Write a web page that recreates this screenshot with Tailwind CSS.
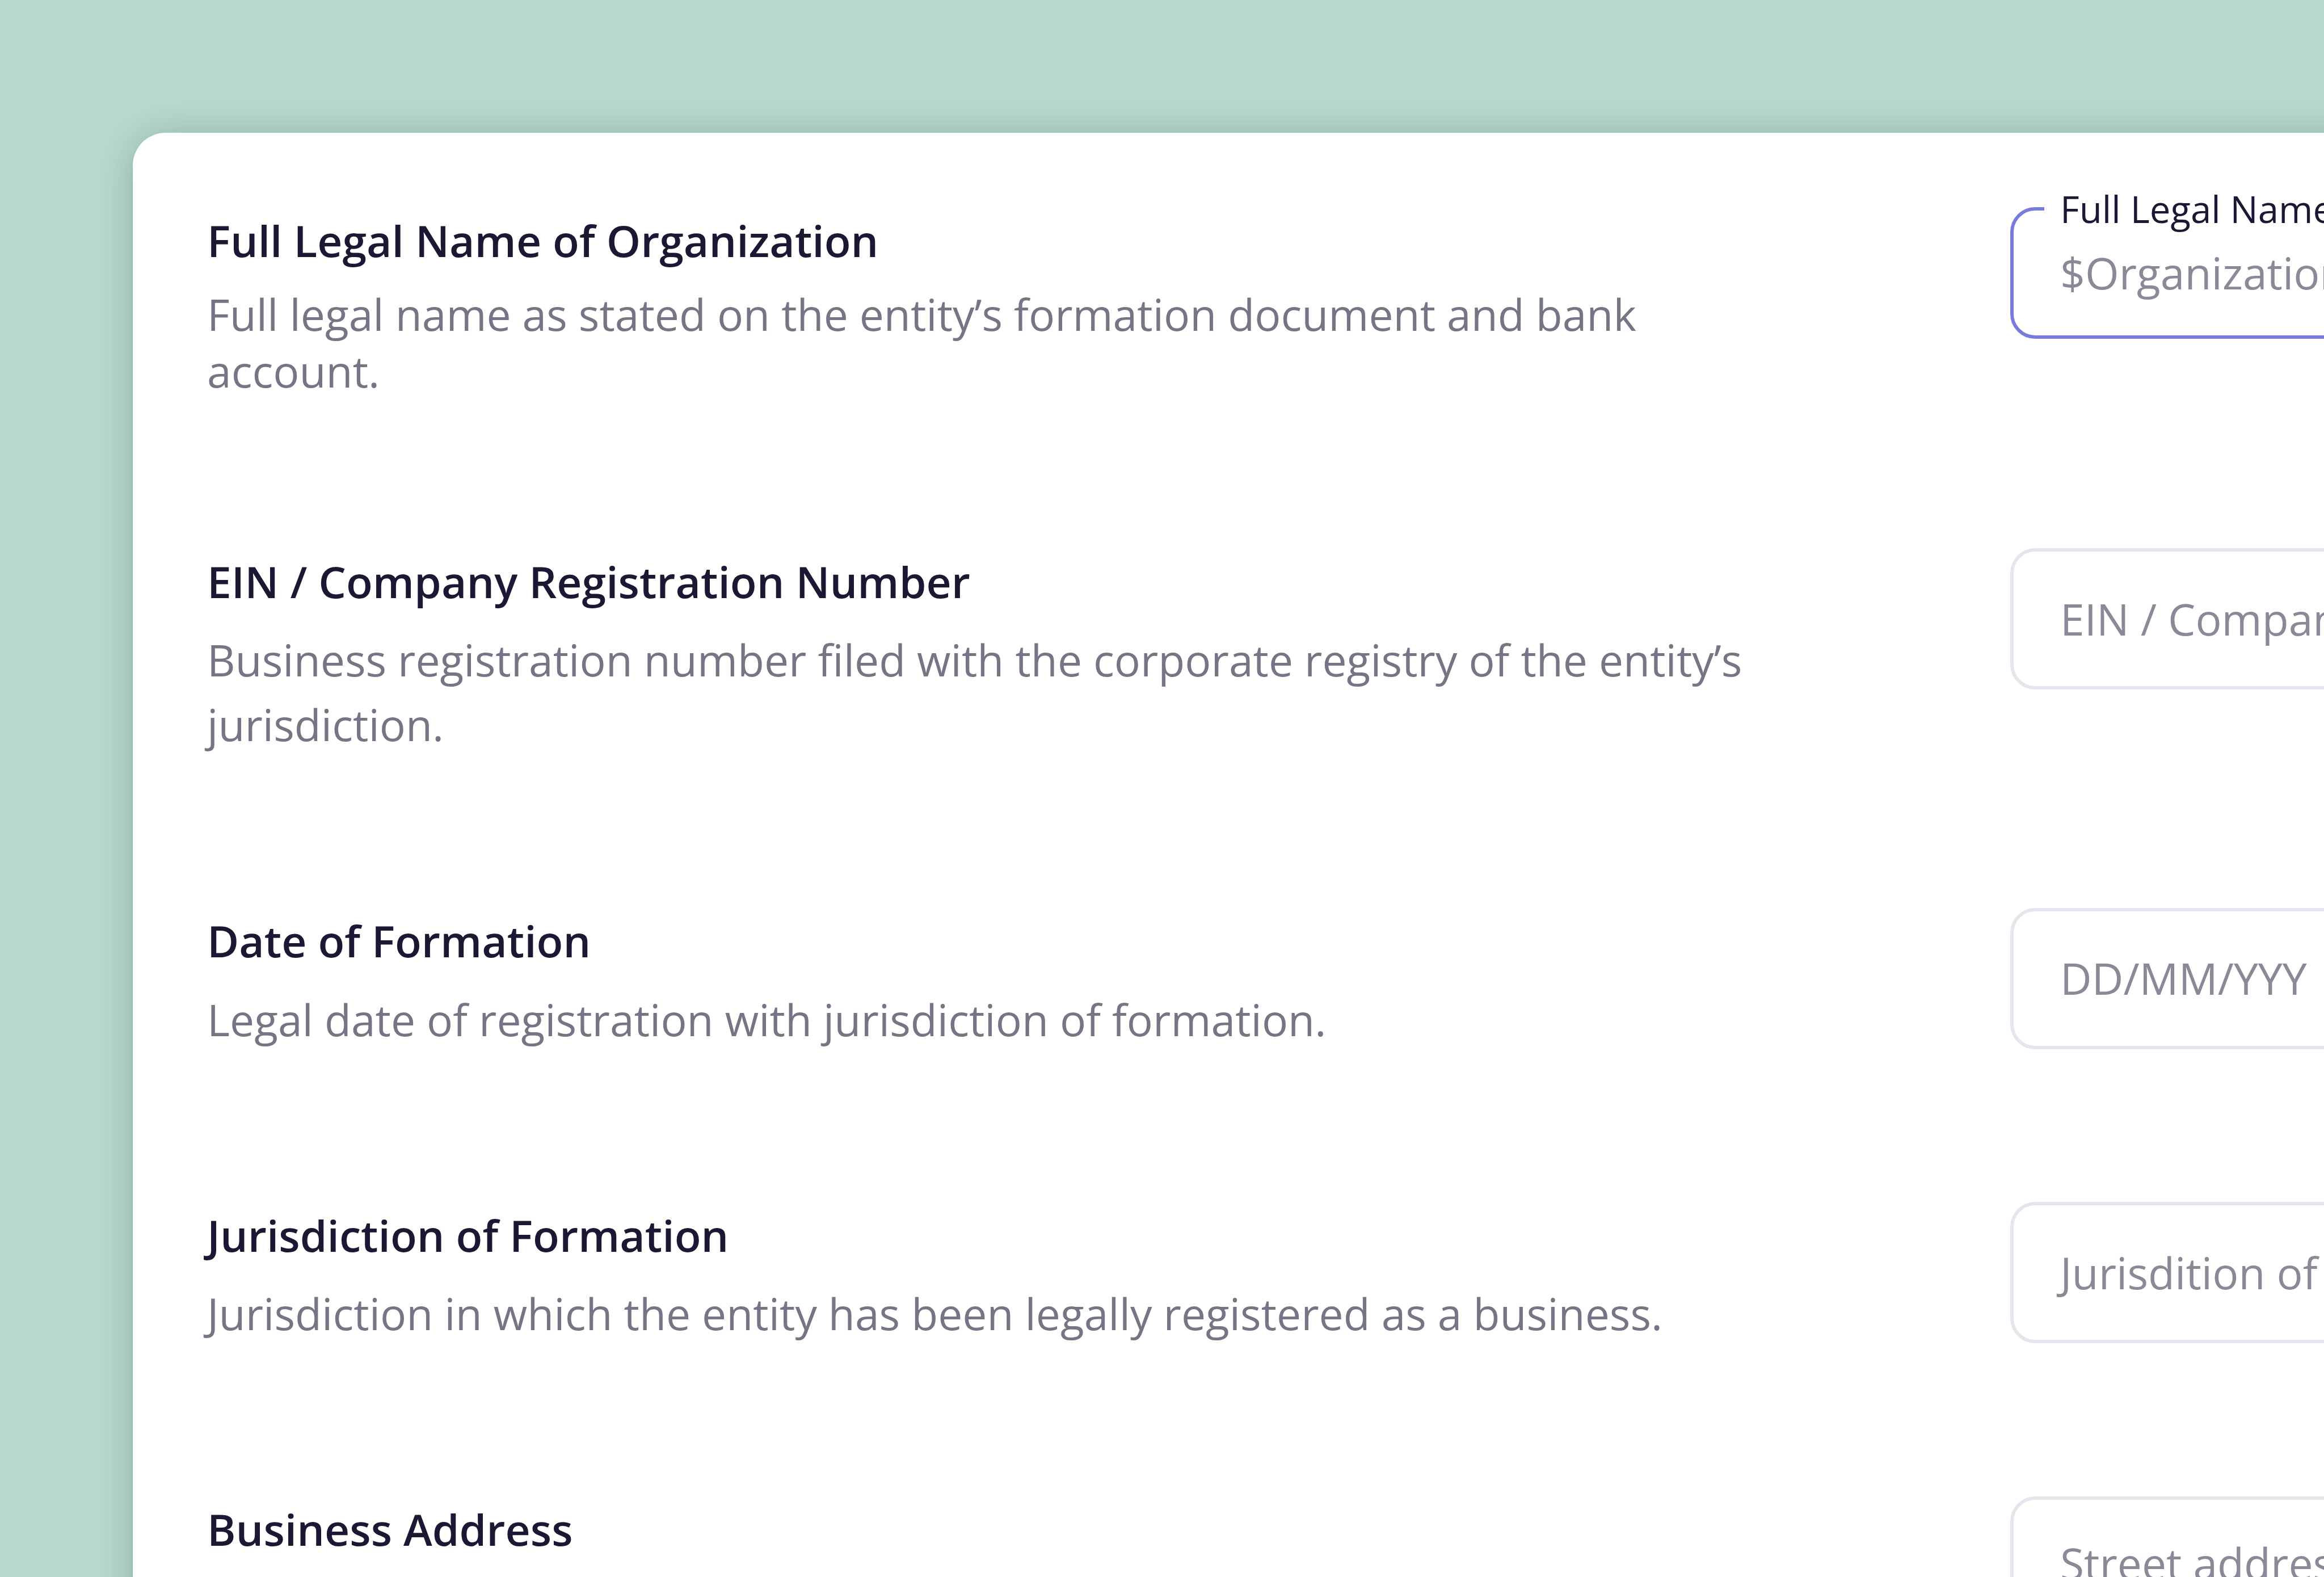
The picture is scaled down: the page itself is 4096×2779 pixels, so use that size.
<!DOCTYPE html>
<html lang="en">
<head>
  <meta charset="UTF-8">
  <title>Organization details</title>
  <script src="https://cdn.jsdelivr.net/npm/@tailwindcss/browser@4"></script>
</head>
<body class="bg-[#b7dbd1] font-['Open_Sans',sans-serif]">
  <div class="w-[4096px] h-[2779px] overflow-hidden pl-[234px] pt-[234px]">
    <main class="w-[5000px] h-[3400px] rounded-[57.6px] bg-white pl-[131px] pt-[131.3px] shadow-[0_5px_5px_rgba(0,0,0,0.1),0_5px_72px_rgba(0,0,0,0.22)] text-[76.8px] leading-[115.2px]">

      <!-- Legal name -->
      <section class="flex items-start h-[600.9px]">
        <div class="w-[3178px] pt-[0.7px]">
          <h2 class="font-semibold text-[#1a1833]">Full Legal Name of Organization</h2>
          <p class="mt-[22.6px] leading-[100px] text-[#777585]">Full legal name as stated on the entity’s formation document and bank<br>account.</p>
        </div>
        <div class="relative w-[1400px] h-[231.5px] rounded-[44px] border-[6px] border-[#777bdb] pl-[82px] pt-[52px]">
          <label class="absolute left-[54px] -top-[51.5px] bg-white px-[28px] text-[65.3px] leading-[96px] text-[#1a1833]">Full Legal Name of Organization</label>
          <span class="block text-[#8b8998]">$OrganizationName</span>
        </div>
      </section>

      <!-- EIN -->
      <section class="flex items-start h-[633.6px]">
        <div class="w-[3178px] pt-[0.7px]">
          <h2 class="font-semibold text-[#1a1833]">EIN / Company Registration Number</h2>
          <p class="mt-[23.8px] leading-[114.3px] text-[#777585]">Business registration number filed with the corporate registry of the entity’s<br>jurisdiction.</p>
        </div>
        <div class="w-[1400px] h-[248.8px] rounded-[44px] border-[6px] border-[#e3e6ec] pl-[82px] pt-[60.6px] text-[#8b8998]">EIN / Company</div>
      </section>

      <!-- Date of formation -->
      <section class="flex items-start h-[518.4px]">
        <div class="w-[3178px] pt-[0.7px]">
          <h2 class="font-semibold text-[#1a1833]">Date of Formation</h2>
          <p class="mt-[23.3px] text-[#777585]">Legal date of registration with jurisdiction of formation.</p>
        </div>
        <div class="w-[1400px] h-[248.8px] rounded-[44px] border-[6px] border-[#e3e6ec] pl-[82px] pt-[60.6px] text-[#8b8998]">DD/MM/YYY</div>
      </section>

      <!-- Jurisdiction -->
      <section class="flex items-start h-[518.4px]">
        <div class="w-[3178px] pt-[0.7px]">
          <h2 class="font-semibold text-[#1a1833]">Jurisdiction of Formation</h2>
          <p class="mt-[23.3px] text-[#777585]">Jurisdiction in which the entity has been legally registered as a business.</p>
        </div>
        <div class="w-[1400px] h-[248.8px] rounded-[44px] border-[6px] border-[#e3e6ec] pl-[82px] pt-[60.6px] text-[#8b8998]">Jurisdition of</div>
      </section>

      <!-- Address -->
      <section class="flex items-start">
        <div class="w-[3178px] pt-[0.7px]">
          <h2 class="font-semibold text-[#1a1833]">Business Address</h2>
        </div>
        <div class="w-[1400px] h-[248.8px] rounded-[44px] border-[6px] border-[#e3e6ec] pl-[82px] pt-[54.5px] text-[#8b8998]">Street address</div>
      </section>

    </main>
  </div>
</body>
</html>
